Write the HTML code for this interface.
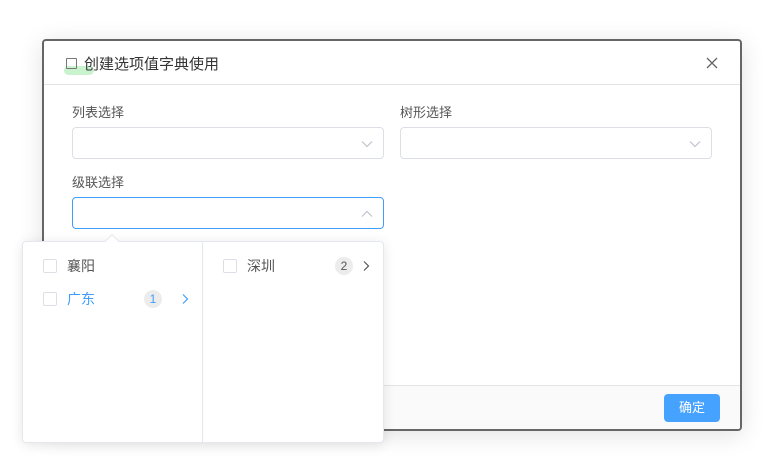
<!DOCTYPE html>
<html><head><meta charset="utf-8"><style>
*{box-sizing:border-box;margin:0;padding:0}
body{width:770px;height:470px;background:#fff;font-family:"Liberation Sans","Noto Sans CJK SC",sans-serif;position:relative;overflow:hidden}
.dlg{position:absolute;left:42px;top:39px;width:700px;height:392px;border:2px solid #666;border-radius:4px;background:#fff;box-shadow:0 4px 24px rgba(0,0,0,.12);overflow:hidden}
.hd{height:44px;border-bottom:1px solid #e4e4e4;position:relative}
.title{position:absolute;left:40px;top:12px;font-size:15px;color:#333}
.ti{position:absolute;left:22px;top:17px;width:11px;height:11px;border:1.5px solid #777;border-radius:1px}
.tg{position:absolute;left:20px;top:25px;width:30px;height:9px;background:#c9f3cf;border-radius:5px}
.x{position:absolute;right:22px;top:16px}
.lbl{position:absolute;font-size:13px;color:#555}
.inp{position:absolute;height:32px;border:1px solid #dcdfe6;border-radius:4px;background:#fff}
.inp svg{position:absolute;right:10px;top:12px}
.ft{position:absolute;left:0;right:0;bottom:0;height:44px;background:#fafafa;border-top:1px solid #e4e4e4}
.btn{position:absolute;right:20px;top:8px;width:56px;height:28px;background:#46a2ff;border-radius:4px;color:#fff;font-size:13px;text-align:center;line-height:28px}
.pop{position:absolute;left:22px;top:241px;width:362px;height:202px;background:#fff;border:1px solid #e4e7ed;border-radius:4px;box-shadow:0 2px 12px rgba(0,0,0,.1)}
.arr{position:absolute;left:107px;top:236px;width:10px;height:10px;background:#fff;border-left:1px solid #e4e7ed;border-top:1px solid #e4e7ed;transform:rotate(45deg)}
.col{position:absolute;top:0;bottom:0;width:180px}
.it{position:absolute;left:0;right:0;height:34px;font-size:14px;color:#555}
.cb{position:absolute;left:20px;top:10px;width:14px;height:14px;border:1px solid #dcdfe6;border-radius:2px;background:#fff}
.tx{position:absolute;left:44px;top:7px}
.bd{position:absolute;top:8px;width:18px;height:18px;border-radius:9px;background:#ececec;font-size:12px;text-align:center;line-height:18px;color:#555}
.ch{position:absolute;top:11px}
</style></head><body>
<div class="dlg">
 <div class="hd"><div class="tg"></div><div class="ti"></div><div class="title">创建选项值字典使用</div>
 <svg class="x" width="12" height="12" viewBox="0 0 12 12"><path d="M1 1L11 11M11 1L1 11" stroke="#666" stroke-width="1.3"/></svg></div>
 <div class="lbl" style="left:28px;top:61px">列表选择</div>
 <div class="inp" style="left:28px;top:86px;width:312px"><svg width="12" height="8" viewBox="0 0 12 8"><path d="M1 1.5L6 6.5L11 1.5" fill="none" stroke="#c0c4cc" stroke-width="1.2"/></svg></div>
 <div class="lbl" style="left:356px;top:61px">树形选择</div>
 <div class="inp" style="left:356px;top:86px;width:312px"><svg width="12" height="8" viewBox="0 0 12 8"><path d="M1 1.5L6 6.5L11 1.5" fill="none" stroke="#c0c4cc" stroke-width="1.2"/></svg></div>
 <div class="lbl" style="left:28px;top:131px">级联选择</div>
 <div class="inp" style="left:28px;top:156px;width:312px;border-color:#409eff"><svg width="12" height="8" viewBox="0 0 12 8"><path d="M1 6.5L6 1.5L11 6.5" fill="none" stroke="#c0c4cc" stroke-width="1.2"/></svg></div>
 <div class="ft"><div class="btn">确定</div></div>
</div>
<div class="pop">
 <div class="col" style="left:0;border-right:1px solid #e4e7ed">
  <div class="it" style="top:7px"><div class="cb"></div><div class="tx">襄阳</div></div>
  <div class="it" style="top:40px;color:#409eff"><div class="cb"></div><div class="tx">广东</div><div class="bd" style="left:121px;color:#409eff">1</div>
   <svg class="ch" style="left:158px" width="8" height="12" viewBox="0 0 8 12"><path d="M2 1.5L6.5 6L2 10.5" fill="none" stroke="#409eff" stroke-width="1.2"/></svg></div>
 </div>
 <div class="col" style="left:180px">
  <div class="it" style="top:7px"><div class="cb"></div><div class="tx">深圳</div><div class="bd" style="left:132px">2</div>
   <svg class="ch" style="left:159px" width="8" height="12" viewBox="0 0 8 12"><path d="M2 1.5L6.5 6L2 10.5" fill="none" stroke="#555" stroke-width="1.2"/></svg></div>
 </div>
</div>
<div class="arr"></div>
</body></html>
